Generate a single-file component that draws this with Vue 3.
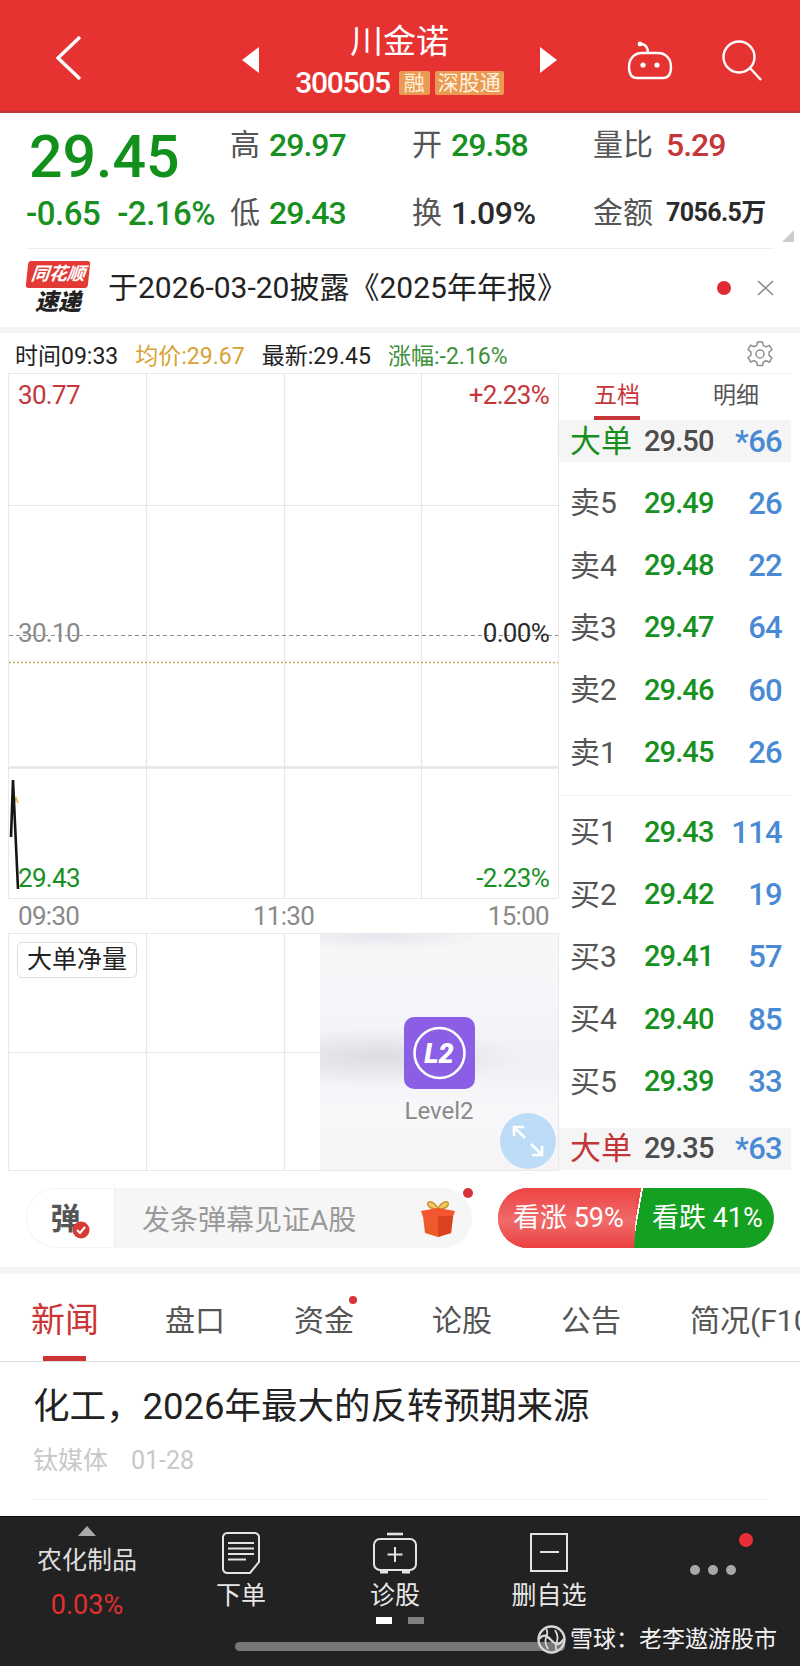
<template>
  <div class="page">
    <header class="top">
      <svg class="back" width="27" height="46" viewBox="0 0 27 46"><path d="M25 2 3 23l22 21" fill="none" stroke="#fff" stroke-width="3.4" /></svg>
      <span class="tri tri-l"></span>
      <div class="title-box">
        <div class="title">川金诺</div>
        <div class="code-row">
          <span class="code">300505</span>
          <span class="tag">融</span>
          <span class="tag">深股通</span>
        </div>
      </div>
      <span class="tri tri-r"></span>
      <svg class="robot" width="46" height="40" viewBox="0 0 46 40" fill="none" stroke="#fff" stroke-width="2.4">
        <path d="M21 12c0-5-2-8-6-9" />
        <circle cx="13" cy="3" r="2.4" fill="#fff" stroke="none" />
        <path d="M15 12h16c8 0 13 6 13 14 0 7-3 11-8 11H10c-5 0-8-4-8-11 0-8 5-14 13-14Z" />
        <circle cx="16" cy="24" r="2.6" fill="#fff" stroke="none" />
        <circle cx="30" cy="24" r="2.6" fill="#fff" stroke="none" />
      </svg>
      <svg class="search" width="42" height="42" viewBox="0 0 42 42" fill="none" stroke="#fff" stroke-width="2.4">
        <circle cx="17" cy="17" r="15.5" />
        <path d="m28 28 11 12" />
      </svg>
    </header>

    <section class="quote">
      <div class="price">29.45</div>
      <div class="stat"><span class="lb">高</span><span class="val up">29.97</span></div>
      <div class="stat"><span class="lb">开</span><span class="val up">29.58</span></div>
      <div class="stat"><span class="lb wide">量比</span><span class="val red">5.29</span></div>
      <div class="change"><span>-0.65</span><span>-2.16%</span></div>
      <div class="stat"><span class="lb">低</span><span class="val up">29.43</span></div>
      <div class="stat"><span class="lb">换</span><span class="val dark">1.09%</span></div>
      <div class="stat"><span class="lb wide">金额</span><span class="val amount">7056.5万</span></div>
      <span class="corner"></span>
    </section>

    <section class="notice">
      <div class="logo">
        <span class="logo-top">同花顺</span>
        <span class="logo-bot">速递</span>
      </div>
      <p class="notice-text">于2026-03-20披露《2025年年报》</p>
      <span class="notice-dot"></span>
      <svg width="17" height="16" viewBox="0 0 17 16"><path d="m1 1 15 14M16 1 1 15" stroke="#8a8a8a" stroke-width="1.6" /></svg>
    </section>
    <div class="band"></div>

    <div class="info">
      <span class="i-dark">时间09:33</span>
      <span class="i-gold">均价:29.67</span>
      <span class="i-dark">最新:29.45</span>
      <span class="i-green">涨幅:-2.16%</span>
      <svg class="gear" width="30" height="30" viewBox="0 0 30 30" fill="none" stroke="#8f8f8f" stroke-width="1.5">
        <path d="M12.5 2h5l.8 3.6 2.7 1.3 3.4-1.5 2.5 4.3-2.8 2.5v3.2l2.8 2.5-2.5 4.3-3.4-1.5-2.7 1.3-.8 3.6h-5l-.8-3.600L9 20.500l-3.400 1.500-2.500-4.300 2.800-2.500v-3.200L3.100 9.500l2.500-4.300L9 6.700l2.700-1.300Z" transform="translate(0 1)" />
        <circle cx="15" cy="15" r="4" />
      </svg>
    </div>

    <div class="board">
      <div class="charts">
        <div class="chart main-chart">
          <svg width="549" height="524" viewBox="0 0 549 524">
            <g stroke="#e6e6e6" stroke-width="1.2">
              <path d="M137.5 0v524M275.5 0v524M412.5 0v524M0 131.5h549" />
              <path d="M0 393.5h549" stroke-width="2.4" />
            </g>
            <path d="M0 261.5h549" stroke="#8c8c8c" stroke-width="1" stroke-dasharray="4 3" />
            <path d="M0 288.5h549" stroke="#c9ad6a" stroke-width="1.4" stroke-dasharray="2 2" />
            <path d="m5 429 2-5 2 5" fill="none" stroke="#e8b23a" stroke-width="1.6" />
            <path d="m2 463 2-57 5 109" fill="none" stroke="#151515" stroke-width="2.6" />
          </svg>
          <span class="c-lb tl red">30.77</span>
          <span class="c-lb tr red">+2.23%</span>
          <span class="c-lb ml grey">30.10</span>
          <span class="c-lb mr dark">0.00%</span>
          <span class="c-lb bl up">29.43</span>
          <span class="c-lb br up">-2.23%</span>
        </div>
        <div class="axis">
          <span>09:30</span><span>11:30</span><span>15:00</span>
        </div>
        <div class="chart sub-chart">
          <svg width="549" height="236" viewBox="0 0 549 236">
            <path d="M137.5 0v236M275.5 0v236M0 118.5h549" stroke="#e6e6e6" stroke-width="1.2" />
          </svg>
          <span class="net-btn">大单净量</span>
          <div class="lock">
            <svg width="71" height="72" viewBox="0 0 71 72">
              <rect width="71" height="72" rx="10" fill="#8b5ee6" />
              <circle cx="35.5" cy="36" r="25" fill="none" stroke="#fff" stroke-width="2.6" />
              <text x="35" y="46" text-anchor="middle" class="l2">L2</text>
            </svg>
            <span class="lock-text">Level2</span>
            <div class="expand">
              <svg width="34" height="34" viewBox="0 0 34 34" fill="none" stroke="#fff" stroke-width="2.6">
                <path d="M3 3l11 11M3 12V3h10M31 31 20 20M31 22v9H21" />
              </svg>
            </div>
          </div>
        </div>
      </div>

      <aside class="book">
        <div class="book-tabs">
          <span class="book-tab on">五档</span>
          <span class="book-tab">明细</span>
        </div>
        <div class="row big">
          <span class="big-lb up">大单</span><span class="p grey-p">29.50</span><span class="q">*66</span>
        </div>
        <div class="levels sell">
          <div v-for="r in sells" :key="r[0]" class="row">
            <span class="lv">{{ r[0] }}</span><span class="p up">{{ r[1] }}</span><span class="q">{{ r[2] }}</span>
          </div>
        </div>
        <div class="levels buy">
          <div v-for="r in buys" :key="r[0]" class="row">
            <span class="lv">{{ r[0] }}</span><span class="p up">{{ r[1] }}</span><span class="q">{{ r[2] }}</span>
          </div>
        </div>
        <div class="row big big-b">
          <span class="big-lb red">大单</span><span class="p grey-p">29.35</span><span class="q">*63</span>
        </div>
      </aside>
    </div>

    <div class="danmu-row">
      <div class="danmu">
        <div class="danmu-icon">
          <span class="dan">弹</span>
          <svg class="dan-check" width="18" height="18" viewBox="0 0 18 18">
            <circle cx="9" cy="9" r="8.5" fill="#d83a34" />
            <path d="m5 9 3 3 5-6" fill="none" stroke="#fff" stroke-width="2" />
          </svg>
        </div>
        <div class="danmu-input">
          <span>发条弹幕见证A股</span>
          <svg width="36" height="38" viewBox="0 0 36 38">
            <path d="M18 10C14 1 6 1 8 6c1 3 6 4 10 4Zm0 0c4-9 12-9 10-4-1 3-6 4-10 4Z" fill="#f3c766" stroke="#c9962f" stroke-width="1.5" />
            <path d="M1 12 18 9l17 3-2 6H3Z" fill="#f4552e" />
            <path d="M3 17h30l-2 17-13 4-13-4Z" fill="#ee5a2c" />
            <path d="M18 17v21l13-4 2-17Z" fill="#d9431f" />
          </svg>
        </div>
        <span class="danmu-dot"></span>
      </div>
      <div class="vote">
        <span class="vote-up">看涨 59%</span>
        <span class="vote-down">看跌 41%</span>
      </div>
    </div>
    <div class="band band-b"></div>

    <nav class="tabs">
      <span class="tab active">新闻</span>
      <span class="tab">盘口</span>
      <span class="tab dotted">资金</span>
      <span class="tab">论股</span>
      <span class="tab">公告</span>
      <span class="tab">简况(F10)</span>
    </nav>

    <article class="article">
      <h2>化工，2026年最大的反转预期来源</h2>
      <div class="meta"><span>钛媒体</span><span>01-28</span></div>
    </article>

    <footer class="bar">
      <div class="bar-nav">
        <div class="sector">
          <span class="sector-tri"></span>
          <span class="sector-name">农化制品</span>
          <span class="sector-pct">0.03%</span>
        </div>
        <div class="act">
          <svg width="38" height="42" viewBox="0 0 38 42" fill="none" stroke="#e4e4e4" stroke-width="2">
            <path d="M5 1h28c2 0 4 2 4 4v25l-9 11H5c-2 0-4-2-4-4V5c0-2 2-4 4-4Z" />
            <path d="M6 11h26M6 16.5h26M6 22h26M6 27.5h18" />
          </svg>
          <span>下单</span>
        </div>
        <div class="act">
          <svg width="44" height="42" viewBox="0 0 44 42" fill="none" stroke="#e4e4e4" stroke-width="2">
            <path d="M14 2h16" stroke-width="2.6" />
            <rect x="1" y="7" width="42" height="31" rx="6" />
            <path d="M22 15v15M14.5 22.5h15" />
            <path d="M7 40h8M29 40h8" stroke-width="3" />
          </svg>
          <span>诊股</span>
        </div>
        <div class="act">
          <svg width="38" height="42" viewBox="0 0 38 42" fill="none" stroke="#e4e4e4" stroke-width="2">
            <rect x="1" y="2" width="36" height="37" />
            <path d="M10 20h19" />
          </svg>
          <span>删自选</span>
        </div>
        <div class="more">
          <span class="more-dot"></span>
          <div class="more-dots"><i></i><i></i><i></i></div>
        </div>
      </div>
      <div class="pager"><i class="cur"></i><i></i></div>
      <div class="handle"></div>
      <div class="mark">
        <svg width="29" height="29" viewBox="0 0 29 29" fill="none" stroke="#d8d8d8" stroke-width="2.4">
          <circle cx="14.5" cy="14.5" r="13" />
          <path d="M2 14c5-6 8-3 12 1s7 7 13-1" />
          <path d="M9 4c5 5-5 9 2 20M20 25c-5-5 5-9-2-20" stroke-width="1.8" />
        </svg>
        <span>雪球：老李遨游股市</span>
      </div>
    </footer>
  </div>
</template>

<script setup>
const sells = [
  ['卖5', '29.49', '26'],
  ['卖4', '29.48', '22'],
  ['卖3', '29.47', '64'],
  ['卖2', '29.46', '60'],
  ['卖1', '29.45', '26'],
]
const buys = [
  ['买1', '29.43', '114'],
  ['买2', '29.42', '19'],
  ['买3', '29.41', '57'],
  ['买4', '29.40', '85'],
  ['买5', '29.39', '33'],
]
</script>

<style>
html, body { margin: 0; background: #fff; }
</style>

<style scoped>
.page {
  width: 800px;
  height: 1666px;
  overflow: hidden;
  display: flex;
  flex-direction: column;
  background: #fff;
  color: #222;
  font-family: Roboto, "Noto Sans CJK SC", sans-serif;
}
.up { color: #17901f; }
.red { color: #c5363a; }
.dark { color: #2b2b2b; }
.grey { color: #8a8a8a; }

/* header */
.top {
  height: 113px;
  box-sizing: border-box;
  flex-shrink: 0;
  display: flex;
  align-items: center;
  padding-left: 55px;
  background: #e73232;
  border-bottom: 2px solid #b93a3a;
}
.back { margin-top: 5px; }
.tri { width: 0; height: 0; border-style: solid; margin-top: 9px; }
.tri-l { margin-left: 160px; border-width: 13px 17px 13px 0; border-color: transparent #fff transparent transparent; }
.tri-r { border-width: 13px 0 13px 17px; border-color: transparent transparent transparent #fff; }
.title-box { width: 281px; display: flex; flex-direction: column; align-items: center; color: #fff; }
.title { font-size: 33px; line-height: 42px; margin-top: 5px; }
.code-row { display: flex; align-items: center; gap: 5px; margin-top: 8px; }
.code { font-size: 30px; line-height: 24px; font-weight: 500; letter-spacing: -1.3px; margin-right: 4px; }
.tag {
  height: 24px;
  min-width: 31px;
  box-sizing: border-box;
  padding: 0 3px;
  text-align: center;
  line-height: 24px;
  font-size: 21px;
  border-radius: 2px;
  background: #ea9a52;
  color: #fff3df;
}
.robot { margin-left: 70px; margin-top: 11px; }
.search { margin-left: 49px; margin-top: 10px; }

/* quote */
.quote {
  position: relative;
  flex-shrink: 0;
  height: 136px;
  box-sizing: border-box;
  margin: 0 26px;
  padding-top: 10px;
  display: grid;
  grid-template-columns: 204px 182px 181px 1fr;
  grid-template-rows: 68px 44px;
  border-bottom: 1px solid #eee;
}
.price { font-size: 59px; line-height: 64px; font-weight: 500; color: #12901c; margin: 2px 0 0 3px; }
.stat { display: flex; align-items: center; gap: 9px; height: 44px; }
.lb { font-size: 30px; line-height: 44px; color: #555; }
.lb.wide { margin-right: 4px; }
.val { font-size: 32px; line-height: 44px; font-weight: 500; letter-spacing: -1px; }
.val.dark { letter-spacing: -0.5px; }
.amount { font-size: 25px; font-weight: 700; letter-spacing: -0.6px; color: #2b2b2b; }
.change { display: flex; align-items: center; gap: 17px; height: 44px; font-size: 33px; font-weight: 500; letter-spacing: -0.5px; color: #17901f; }
.corner {
  position: absolute;
  right: -20px;
  bottom: 6px;
  width: 0;
  height: 0;
  border-style: solid;
  border-width: 0 0 12px 12px;
  border-color: transparent transparent #ccc transparent;
}

/* notice */
.notice {
  height: 78px;
  flex-shrink: 0;
  display: flex;
  align-items: center;
  padding-left: 26px;
  padding-right: 26px;
}
.logo { width: 64px; display: flex; flex-direction: column; align-items: center; }
.logo-top {
  width: 62px;
  height: 27px;
  line-height: 26px;
  text-align: center;
  background: #e23a34;
  color: #fff;
  font-size: 18px;
  font-weight: 700;
  font-style: italic;
  border-radius: 3px;
  transform: skewX(-6deg);
}
.logo-bot { font-size: 23px; line-height: 27px; font-weight: 900; font-style: italic; color: #222; margin-top: 1px; }
.notice-text { margin: 0 0 0 18px; flex: 1; font-size: 30px; line-height: 40px; color: #222; }
.notice-dot { width: 14px; height: 14px; border-radius: 50%; background: #e02b33; margin-right: 26px; }
.band { height: 6px; flex-shrink: 0; background: #f5f5f5; }
.band-b { height: 7px; }

/* info row */
.info {
  height: 40px;
  flex-shrink: 0;
  box-sizing: border-box;
  padding: 1px 25px 0 15px;
  display: flex;
  align-items: center;
  gap: 17px;
  font-size: 23px;
}
.i-dark { color: #222; }
.i-gold { color: #d9a233; }
.i-green { color: #3d8f3a; }
.gear { margin-left: auto; }

/* board */
.board { flex-shrink: 0; display: flex; margin-left: 8px; height: 798px; }
.charts { width: 551px; }
.chart { position: relative; border: 1px solid #e8e8e8; }
.chart svg { display: block; }
.main-chart { height: 524px; }
.c-lb { position: absolute; font-size: 26px; letter-spacing: -0.7px; line-height: 28px; }
.tl { left: 9px; top: 7px; }
.tr { right: 9px; top: 7px; }
.ml { left: 9px; top: 245px; }
.mr { right: 9px; top: 245px; }
.bl { left: 9px; bottom: 6px; }
.br { right: 9px; bottom: 6px; }
.axis {
  height: 34px;
  display: flex;
  justify-content: space-between;
  align-items: center;
  padding: 0 10px;
  font-size: 26px;
  letter-spacing: -0.7px;
  color: #8a8a8a;
}
.sub-chart { height: 236px; }
.net-btn {
  position: absolute;
  left: 8px;
  top: 8px;
  padding: 0 9px;
  height: 34px;
  line-height: 34px;
  font-size: 25px;
  color: #222;
  background: #fff;
  border: 1px solid #ddd;
  border-radius: 5px;
}
.lock {
  position: absolute;
  left: 311px;
  right: 0;
  top: 0;
  bottom: 0;
  display: flex;
  flex-direction: column;
  align-items: center;
  padding-top: 83px;
  background:
    radial-gradient(ellipse 45% 6% at 25% 1%, #e6e6f0, transparent),
    radial-gradient(ellipse 60% 12% at 25% 52%, #dcdce2, transparent),
    linear-gradient(#f8f7f5, #f6f5fb 30%, #f1f0f4 55%, #f8f7fa 75%, #f6f4f7);
}
.l2 { font-size: 27px; font-weight: 900; font-style: italic; fill: #fff; font-family: Roboto, sans-serif; }
.lock-text { margin-top: 8px; font-size: 24px; line-height: 28px; color: #8a8a8a; }
.expand {
  position: absolute;
  right: 2px;
  bottom: 1px;
  width: 56px;
  height: 56px;
  border-radius: 50%;
  background: #bcdcf8;
  display: flex;
  align-items: center;
  justify-content: center;
}

/* order book */
.book { width: 232px; display: flex; flex-direction: column; }
.book-tabs { height: 47px; display: flex; border-top: 1px solid #f0f0f0; box-sizing: border-box; }
.book-tab { position: relative; font-size: 23px; line-height: 44px; color: #555; }
.book-tab:first-child { margin-left: 35px; }
.book-tab:last-child { margin-left: 73px; }
.book-tab.on { color: #c5363a; }
.book-tab.on::after {
  content: "";
  position: absolute;
  left: 0;
  right: 0;
  bottom: 0;
  height: 4px;
  background: #c5363a;
}
.row {
  display: grid;
  grid-template-columns: 74px 1fr auto;
  align-items: center;
  padding: 0 9px 0 11px;
  height: 62.4px;
  line-height: 1;
}
.row.big { height: 42px; background: #f5f5f5; }
.big-b { margin-top: 15px; }
.big-lb { font-size: 31px; }
.lv { font-size: 30px; color: #555; }
.p { font-size: 29px; font-weight: 500; letter-spacing: -0.9px; }
.grey-p { color: #4d4d4d; }
.q { font-size: 31px; color: #4a8ad4; font-weight: 500; letter-spacing: -0.7px; }
.sell { margin-top: 10px; padding-bottom: 11px; border-bottom: 1px solid #f1f1f1; }
.buy { margin-top: 5px; }

/* danmu + vote */
.danmu-row {
  height: 96px;
  flex-shrink: 0;
  box-sizing: border-box;
  padding: 17px 26px 19px;
  display: flex;
  gap: 26px;
}
.danmu { position: relative; width: 446px; display: flex; }
.danmu-icon {
  position: relative;
  width: 89px;
  box-sizing: border-box;
  border: 1px solid #f4f4f4;
  border-right: 1px solid #ececec;
  border-radius: 30px 0 0 30px;
  display: flex;
  align-items: center;
  justify-content: center;
}
.dan { font-size: 30px; font-weight: 700; color: #555; margin-right: 10px; margin-bottom: 4px; }
.dan-check { position: absolute; left: 45px; top: 32px; }
.danmu-input {
  flex: 1;
  display: flex;
  align-items: center;
  justify-content: space-between;
  padding: 0 16px 0 27px;
  font-size: 28px;
  color: #9a9a9a;
  background: #f6f6f6;
  border-radius: 0 30px 30px 0;
}
.danmu-dot { position: absolute; right: -1px; top: 0; width: 10px; height: 10px; border-radius: 50%; background: #d8333a; }
.vote {
  width: 276px;
  display: flex;
  border-radius: 30px;
  overflow: hidden;
  color: #fff;
  font-size: 27px;
  line-height: 60px;
  background: linear-gradient(100deg, #ee4a4a 50%, #fff 50%, #fff 50.6%, #14a020 50.6%);
}
.vote-up { width: 139px; padding-left: 15px; box-sizing: border-box; background: linear-gradient(#ec4444, #f26a6a 55%, #ea4040); clip-path: polygon(0 0, 100% 0, 98% 100%, 0 100%); }
.vote-down { margin-left: 15px; }

/* tabs */
.tabs {
  height: 88px;
  flex-shrink: 0;
  box-sizing: border-box;
  display: flex;
  align-items: center;
  gap: 69px;
  padding: 0 0 0 31px;
  border-bottom: 1px solid #ddd;
  overflow: hidden;
  white-space: nowrap;
}
.tab { position: relative; font-size: 30px; color: #555; flex-shrink: 0; }
.tab.active { font-size: 34px; color: #cc3535; margin-right: -3px; }
.tab.active::after {
  content: "";
  position: absolute;
  left: 12px;
  right: 13px;
  bottom: -19px;
  height: 5px;
  background: #cc3535;
}
.tab.dotted { margin-right: 9px; }
.tab.dotted::after {
  content: "";
  position: absolute;
  right: -3px;
  top: 0;
  width: 8px;
  height: 8px;
  border-radius: 50%;
  background: #d8333a;
}

/* article */
.article { height: 154px; flex-shrink: 0; box-sizing: border-box; padding: 23px 32px 0 33px; }
.article h2 { margin: 0; font-size: 36.5px; line-height: 44px; font-weight: 400; color: #222; }
.meta {
  margin-top: 16px;
  padding-bottom: 22px;
  display: flex;
  gap: 23px;
  font-size: 25px;
  line-height: 32px;
  color: #c8c8c8;
  border-bottom: 1px solid #f3f3f3;
}

/* bottom bar */
.bar { position: relative; flex: 1; background: #222; border-top: 1px solid #111; }
.bar-nav { height: 100px; display: grid; grid-template-columns: repeat(4, 154px) 1fr; padding-left: 10px; }
.sector { display: flex; flex-direction: column; align-items: center; padding-top: 9px; }
.sector-tri { width: 0; height: 0; border-style: solid; border-width: 0 9px 10px 9px; border-color: transparent transparent #aaa transparent; }
.sector-name { margin-top: 7px; font-size: 25px; line-height: 36px; color: #ddd; }
.sector-pct { margin-top: 8px; font-size: 27px; line-height: 36px; color: #e03030; }
.act { display: flex; flex-direction: column; align-items: center; padding-top: 15px; color: #e8e8e8; font-size: 25px; }
.act span { margin-top: 4px; line-height: 36px; }
.more { position: relative; display: flex; justify-content: center; padding-top: 48px; }
.more-dots { display: flex; gap: 8px; }
.more-dots i { width: 10px; height: 10px; border-radius: 50%; background: #a8a8a8; }
.more-dot { position: absolute; left: 113px; top: 16px; width: 14px; height: 14px; border-radius: 50%; background: #e82f36; }
.pager { display: flex; justify-content: center; gap: 16px; height: 7px; }
.pager i { width: 16px; height: 7px; background: #808080; }
.pager i.cur { background: #fff; }
.handle { width: 330px; height: 9px; margin: 18px 0 0 235px; border-radius: 5px; background: #777; }
.mark {
  position: absolute;
  left: 537px;
  top: 108px;
  display: flex;
  align-items: center;
  gap: 4px;
  font-size: 23px;
  line-height: 28px;
  color: #f2f2f2;
  white-space: nowrap;
}
</style>
